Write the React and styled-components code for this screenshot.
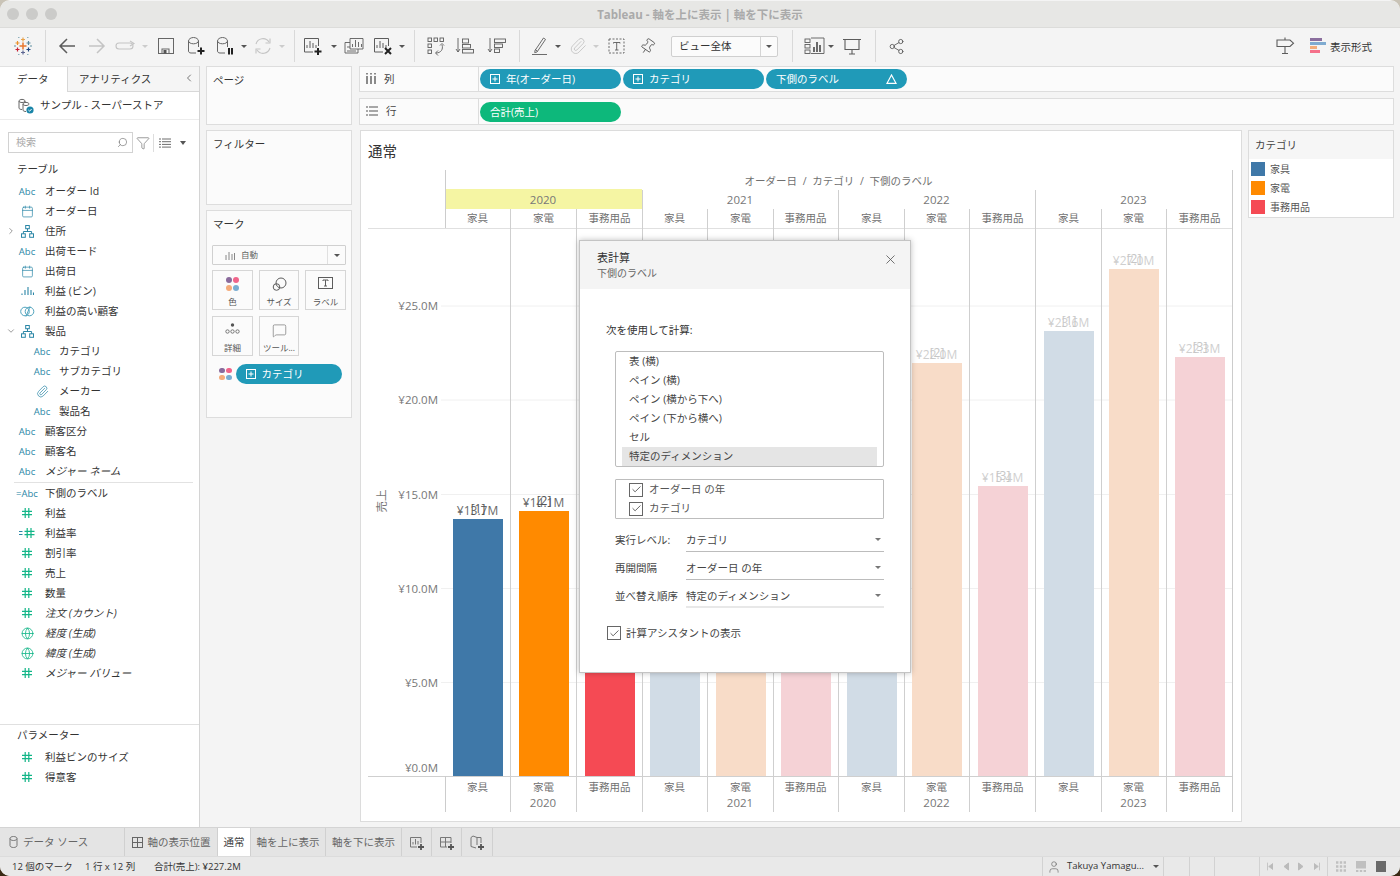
import React from 'react';
import styled, { createGlobalStyle } from 'styled-components';
import { Paperclip, Share2, Pin, Globe, Calendar, Search, Funnel, ChevronLeft, ChevronRight, ChevronDown, X, Check, MessageSquare, User } from 'lucide-react';

const FONT = `"Open Sans", "Noto Sans CJK JP", sans-serif`;

const Global = createGlobalStyle`
  html, body { margin: 0; padding: 0; height: 876px; overflow: hidden; background: linear-gradient(#c9c3b6 0 50%, #3a2a15 50%); }
  * { box-sizing: border-box; }
  body { font-family: ${FONT}; font-size: 10.5px; color: #333; }
`;

const Win = styled.div`
  position: relative; width: 1400px; height: 876px; border-radius: 10px; overflow: hidden;
  background: #f4f4f4; display: flex; flex-direction: column; padding-top: 1px;
`;
const Shift = styled.span`display: block; margin-top: -2px; white-space: nowrap;`;

/* title bar */
const TitleBar = styled.div`
  height: 27px; flex: none; background: #e7e7e5; border-bottom: 1px solid #dcdcda; display: flex; align-items: center;
  position: relative; justify-content: center; font-size: 11.5px; font-weight: 700; color: #aaa;
`;
const Lights = styled.div`position: absolute; left: 7px; top: 7px; display: flex; gap: 7px;`;
const Light = styled.span`width: 12px; height: 12px; border-radius: 50%; background: #cbcbc9;`;

/* toolbar */
const Toolbar = styled.div`
  height: 38px; flex: none; background: #f4f4f4; display: flex; align-items: center; padding: 0 28px 2px 0;
`;
const Slot = styled.div`
  width: ${p => p.$w || 20}px; margin-left: ${p => p.$ml || 0}px; flex: none; height: 24px;
  display: flex; align-items: center; justify-content: center;
  svg { display: block; }
`;
const Sep = styled.div`width: 1px; height: 32px; background: #d9d9d9; flex: none; margin-left: ${p => p.$ml}px;`;
const Caret = styled.span`
  display: inline-block; width: 0; height: 0; flex: none;
  border-left: ${p => p.$s || 3}px solid transparent; border-right: ${p => p.$s || 3}px solid transparent;
  border-top: ${p => (p.$s || 3) + 0.5}px solid ${p => p.$c || '#555'};
`;
const FitSelect = styled.div`
  width: 107px; height: 21px; margin-left: 14px; flex: none; background: #fbfbfb; border: 1px solid #cfcfcf; border-radius: 2px;
  display: flex; align-items: center; padding-left: 7px; font-size: 10.5px; color: #333;
`;
const FitCaret = styled.div`
  margin-left: auto; width: 17px; height: 100%; border-left: 1px solid #d5d5d5; display: flex; align-items: center; justify-content: center;
`;
const FormatLabel = styled.div`font-size: 10.5px; color: #333; margin-left: 4px; white-space: nowrap; width: 42px; flex: none;`;
const RightTools = styled.div`margin-left: auto; display: flex; align-items: center;`;

/* main */
const Main = styled.div`flex: 1; display: flex; min-height: 0;`;
const DataPane = styled.div`width: 200px; flex: none; background: #fff; border-right: 1px solid #d4d4d4; display: flex; flex-direction: column;`;
const PaneTabs = styled.div`display: flex; height: 26px; flex: none;`;
const PaneTab = styled.div`
  display: flex; align-items: center; font-size: 10.5px; color: #333; padding-left: ${p => p.$active ? 17 : 11}px; padding-bottom: 2px;
  width: ${p => p.$active ? 67 : 132}px; background: ${p => p.$active ? '#fff' : '#f5f5f5'};
  border-top: 1px solid #e2e2e2; border-left: ${p => p.$active ? 'none' : '1px solid #d8d8d8'};
  border-bottom: ${p => p.$active ? 'none' : '1px solid #d8d8d8'};
  svg { margin-left: auto; margin-right: 4px; }
`;
const SourceRow = styled.div`
  height: 28px; flex: none; display: flex; align-items: center; padding-left: 18px; gap: 6px; border-bottom: 1px solid #ececec;
  font-size: 10.5px; color: #333;
`;
const SearchRow = styled.div`display: flex; align-items: center; margin-top: 12px; height: 21px; flex: none; padding-left: 8px;`;
const SearchBox = styled.div`
  width: 125px; height: 21px; border: 1px solid #d2d2d2; display: flex; align-items: center; justify-content: space-between;
  padding: 0 4px 0 7px; color: #aaa; font-size: 10px; background: #fff;
`;
const SearchTools = styled.div`display: flex; align-items: center; margin-left: 3px;`;
const ThinSep = styled.div`width: 1px; height: 18px; background: #ddd; margin: 0 5px 0 3px;`;
const GroupHead = styled.div`height: 20px; margin-top: ${p => p.$mt || 0}px; margin-bottom: ${p => p.$mb || 0}px; padding-left: 17px; padding-bottom: 2px; display: flex; align-items: center; font-size: 10.5px; color: #333; flex: none;`;
const FieldRow = styled.div`height: 20px; flex: none; display: flex; align-items: center; padding-left: 4px; font-size: 10.5px; color: #333;`;
const Chev = styled.div`width: 14px; flex: none; display: flex; justify-content: center; color: #888;`;
const FieldIcon = styled.div`
  width: 18px; flex: none; margin-left: ${p => p.$indent ? 15 : 0}px; margin-right: ${p => p.$indent ? 8 : 9}px;
  display: flex; align-items: center; justify-content: center; font-size: 9.5px; color: #2a86a6; white-space: nowrap;
`;
const FieldName = styled.span`font-style: ${p => p.$italic ? 'italic' : 'normal'}; white-space: nowrap; margin-top: -2px;`;
const FieldRule = styled.div`height: 1px; background: #e2e2e2; margin: 1px 6px 0 14px; flex: none;`;
const ParamRule = styled.div`height: 1px; background: #e0e0e0; margin-top: 41px; flex: none;`;

/* cards */
const CardCol = styled.div`width: 146px; flex: none; margin-left: 6px; display: flex; flex-direction: column;`;
const Card = styled.div`
  border: 1px solid #ddd; background: #fbfbfb; height: ${p => p.$h}px; margin-top: ${p => p.$mt}px; flex: none; padding: 6px 5px;
`;
const CardTitle = styled.div`font-size: 10.5px; color: #333; line-height: 15px; padding-left: 1px;`;
const MarkSelect = styled.div`
  height: 20px; margin-top: 13px; border: 1px solid #d0d0d0; border-radius: 1px; display: flex; align-items: center; background: #fbfbfb;
  font-size: 8.5px; color: #666; padding-left: 12px; gap: 6px;
`;
const MarkSelectCaret = styled.div`margin-left: auto; width: 18px; height: 100%; border-left: 1px solid #e0e0e0; display: flex; align-items: center; justify-content: center;`;
const TileGrid = styled.div`display: grid; grid-template-columns: 41px 40px 41px; column-gap: 6px; row-gap: 6px; margin-top: 5px;`;
const Tile = styled.div`
  height: 40px; border: 1px solid #d6d6d6; background: #fbfbfb; display: flex; flex-direction: column; align-items: center; justify-content: space-between;
  padding: 6px 0 2px; font-size: 8.5px; color: #555; line-height: 11px; white-space: nowrap;
`;
const MarkPillRow = styled.div`display: flex; align-items: center; margin-top: 8px; padding-left: 7px; gap: 4px;`;
const Dots = styled.div`display: grid; grid-template-columns: 5.5px 5.5px; gap: 1.5px;`;
const Dot = styled.span`width: 5.5px; height: 5.5px; border-radius: 50%; background: ${p => p.$c};`;
const BigDots = styled(Dots)`grid-template-columns: 6px 6px; gap: 1.5px;`;
const BigDot = styled(Dot)`width: 6px; height: 6px;`;

/* pills */
const Pill = styled.div`
  width: ${p => p.$w || 141}px; height: 20px; flex: none; border-radius: 10px; background: ${p => p.$green ? '#0db87b' : '#209ab8'};
  color: #fff; font-size: 10.5px; display: flex; align-items: center; padding-left: ${p => p.$pl || 10}px; padding-bottom: 1px; white-space: nowrap; gap: 6px;
`;
const PillEnd = styled.span`margin-left: auto; margin-right: 10px; display: flex;`;

/* right */
const RightCol = styled.div`width: 1035px; margin-left: 7px; flex: none; display: flex; flex-direction: column;`;
const Shelf = styled.div`
  height: ${p => p.$h}px; margin-top: ${p => p.$mt || 0}px; flex: none; border: 1px solid #ddd; background: #fbfbfb; display: flex;
`;
const ShelfHead = styled.div`
  width: 119px; flex: none; border-right: 1px solid #ddd; display: flex; align-items: center; padding: 0 0 2px 6px; gap: 8px; font-size: 10.5px; color: #444;
`;
const ShelfBody = styled.div`display: flex; align-items: center; gap: 2px; padding-left: 1px;`;
const ViewRow = styled.div`display: flex; margin-top: 5px; flex: 1; min-height: 0;`;
const View = styled.div`
  width: 882px; margin-left: 1px; height: 692px; border: 1px solid #dcdcdc; background: #fff; flex: none;
  svg { display: block; }
`;
const ViewTitle = styled.div`height: 39px; padding: 11px 0 0 7px; font-size: 14.5px; line-height: 20px; color: #333;`;
const Legend = styled.div`width: 146px; height: 88px; margin-left: 6px; flex: none; border: 1px solid #dcdcdc; background: #fff;`;
const LegendHead = styled.div`height: 28px; background: #f6f6f6; padding-left: 6px; padding-bottom: 1px; display: flex; align-items: center; font-size: 10.5px; color: #444;`;
const LegendRows = styled.div`padding: 0 0 0 2px;`;
const LegendRow = styled.div`height: 19px; display: flex; align-items: center; gap: 5px; font-size: 10px; color: #555;`;
const Swatch = styled.span`width: 14px; height: 14px; background: ${p => p.$c};`;

/* chart */
const AxisText = styled.text`font-family: ${FONT}; font-size: 11.5px; fill: #777; text-anchor: ${p => p.$anchor || 'middle'};`;
const CatText = styled.text`font-family: ${FONT}; font-size: 10.5px; fill: #707070; text-anchor: middle; word-spacing: ${p => p.$ws || 0}px;`;
const YearText = styled.text`font-family: ${FONT}; font-size: 11.5px; fill: #777; text-anchor: middle;`;
const ValueText = styled.text`font-family: ${FONT}; font-size: 12px; text-anchor: middle; fill: ${p => p.$faded ? '#cfcfcf' : '#6a6a6a'};`;
const IdxText = styled.text`font-family: ${FONT}; font-size: 12px; text-anchor: middle; fill: ${p => p.$faded ? '#c6c6c6' : '#555'};`;

/* tabs */
const TabBar = styled.div`height: 29px; flex: none; background: #e4e4e4; border-top: 1px solid #d4d4d4; display: flex;`;
const SheetTab = styled.div`
  width: ${p => p.$w}px; flex: none; display: flex; align-items: center; justify-content: ${p => p.$left ? 'flex-start' : 'center'};
  padding-left: ${p => p.$left ? p.$left : 0}px; gap: 5px; font-size: 10.5px; white-space: nowrap;
  color: ${p => p.$active ? '#444' : '#666'}; background: ${p => p.$active ? '#fff' : 'transparent'}; border-right: 1px solid #d0d0d0;
`;
const StatusBar = styled.div`height: 20px; flex: none; background: #e9e9e9; border-top: 1px solid #dcdcdc; display: flex; align-items: center; font-size: 9.5px; color: #333;`;
const StatusText = styled.span`white-space: nowrap; margin-left: ${p => p.$ml || 0}px; width: ${p => p.$w}px; flex: none; margin-top: -2px;`;
const StatusRight = styled.div`margin-left: auto; display: flex; height: 100%;`;
const StatusCell = styled.div`
  width: ${p => p.$w}px; flex: none; border-left: 1px solid #d2d2d2; display: flex; align-items: center; padding-left: ${p => p.$pl || 0}px; gap: ${p => p.$gap || 0}px; white-space: nowrap;
`;
const UserName = styled.span`width: 80px; flex: none; margin-top: -2px;`;
const DimIcon = styled.span`display: flex; color: #bbb; width: 6px; justify-content: center;`;
const ViewSizeBox = styled.span`width: 10px; height: 11px; background: ${p => p.$c}; flex: none;`;

/* dialog */
const Dialog = styled.div`
  position: absolute; left: 579px; top: 240px; width: 332px; height: 433px; background: #fff; border: 1px solid #c4c4c4;
  box-shadow: 0 0 6px rgba(0,0,0,.25); display: flex; flex-direction: column;
`;
const DialogHead = styled.div`height: 48px; flex: none; background: #f4f4f4; display: flex; justify-content: space-between; padding: 9px 12px 0 17px;`;
const DialogTitle = styled.div`font-size: 11px; color: #333; line-height: 16px;`;
const DialogSub = styled.div`font-size: 10px; color: #666; line-height: 14px;`;
const DialogBody = styled.div`padding-left: 26px;`;
const BodyLabel = styled.div`margin-top: 33px; line-height: 16px; font-size: 10.5px; color: #333;`;
const ListBox = styled.div`margin: 13px 0 0 9px; width: 269px; height: 116px; border: 1px solid #bdbdbd; border-radius: 2px; background: #fff;`;
const ListItem = styled.div`
  height: 19px; display: flex; align-items: center; font-size: 10.5px; color: #444; white-space: nowrap;
  margin: 0 6px; padding: 0 0 2px 7px; background: ${p => p.$sel ? '#e5e5e5' : 'transparent'};
`;
const CheckBox = styled.div`margin: 12px 0 0 9px; width: 269px; height: 40px; border: 1px solid #bdbdbd; border-radius: 1px; padding-left: 13px;`;
const CheckRow = styled.div`height: 19px; display: flex; align-items: center; gap: 6px; font-size: 10.5px; color: #555;`;
const Tick = styled.span`
  width: 14px; height: 14px; flex: none; background: #fff; border: 1px solid #666; display: flex; align-items: center; justify-content: center; color: #444;
`;
const FormRows = styled.div`margin: 11px 0 0 9px; width: 269px;`;
const FormRow = styled.div`display: flex; height: 22px; margin-bottom: ${p => p.$mb || 0}px; font-size: 10.5px; color: #444;`;
const FormLabel = styled.div`width: 71px; flex: none; padding-top: 3px; line-height: 15px; white-space: nowrap;`;
const FormValue = styled.div`
  flex: 1; display: flex; justify-content: space-between; padding: 3px 3px 0 0; line-height: 15px; white-space: nowrap;
  border-bottom: ${p => p.$light ? '2px solid #e8e8e8' : '1px solid #bcbcbc'};
  span:last-child { margin-top: 5px; }
`;
const AssistRow = styled.div`display: flex; align-items: center; gap: 5px; margin: 18px 0 0 1px; font-size: 10.5px; color: #444;`;

/* icons */
const Svg = ({ w = 20, h = 20, c = '#5c5c5c', sw = 1.1, children }) => (
  <svg width={w} height={h} viewBox={`0 0 ${w} ${h}`} fill="none" stroke={c} strokeWidth={sw}>{children}</svg>
);
const BOLD = { stroke: '#222', strokeWidth: 2 };

const TableauLogo = () => (
  <svg width="20" height="20" viewBox="0 0 20 20" fill="none" strokeWidth="1.2">
    <path d="M10 6.500v7M6.500 10h7" stroke="#e8762d" strokeWidth="1.500" />
    <path d="M10 1.500v4M8 3.500h4" stroke="#e8a24a" />
    <path d="M10 14.500v4M8 16.500h4" stroke="#5c6692" />
    <path d="M4.500 5v4M2.500 7h4" stroke="#eb912b" />
    <path d="M15.500 5v4M13.500 7h4" stroke="#5b879b" />
    <path d="M4.500 11.500v4M2.500 13.500h4" stroke="#c72035" />
    <path d="M15.500 11.500v4M13.500 13.500h4" stroke="#1f447e" />
    <path d="M1 10h2M2 9v2M17 10h2M18 9v2M5 1.500h1.500M14 1.500h1.500M5 18.500h1.500M14 18.500h1.500" stroke="#8fb0bc" strokeWidth="1" />
  </svg>
);
const ArrowBack = ({ c }) => <Svg c={c} sw={1.5}><path d="M18 10H3M10 3l-7 7 7 7" /></Svg>;
const ArrowFwd = ({ c }) => <Svg c={c} sw={1.5}><path d="M2 10h15M10 3l7 7-7 7" /></Svg>;
const RedoIcon = () => <Svg w={22} c="#c4c4c4" sw={1.1}><rect x="1" y="7" width="17" height="6" rx="3" /><path d="M15 5l4 2.500-4 2.500" /></Svg>;
const SaveIcon = () => <Svg w={18} h={18} sw={1} c="#666"><rect x="1.500" y="1.500" width="15" height="15" /><rect x="5" y="12" width="7" height="4.500" /><rect x="6.500" y="13" width="3" height="3.500" fill="#555" stroke="none" /></Svg>;
const Cyl = () => <path d="M2.500 5v10c0 1.200 1 2 2.500 2h5M2.500 5c0-2 2.500-3.500 5-3.500S12.500 3 12.500 5v6M2.500 5c0 1.600 2.500 2.800 5 2.800s5-1.200 5-2.800" stroke="#666" strokeWidth="1" />;
const DsPlus = () => <Svg><Cyl /><path d="M15 11.500v7M11.500 15h7" {...BOLD} /></Svg>;
const DsPause = () => <Svg><Cyl /><path d="M14 12v6.500M17 12v6.500" {...BOLD} /></Svg>;
const RefreshIcon = () => <Svg c="#c4c4c4" sw={1.100}><path d="M3 8a7.200 7.200 0 0 1 13-2M17 12a7.200 7.200 0 0 1-13 2" /><path d="M17 2.500V7h-4.500M3 17.500V13h4.500" /></Svg>;
const Bars = ({ x = 4, y = 12 }) => <path d={`M${x} ${y}v-3M${x + 3} ${y}v-7M${x + 6} ${y}v-5M${x + 9} ${y}v-3`} />;
const NewSheet = () => <Svg sw={1}><path d="M10 16H1.500V2.500h14V10" /><Bars /><path d="M15 12v7M11.500 15.500h7" {...BOLD} /></Svg>;
const DupSheet = () => <Svg sw={.9}><path d="M6 13V2.500h13V13z" /><Bars x={8.500} y={11} /><path d="M6 6.500H1V17h13v-4" /><path d="M3 15h9M3 11h3" /></Svg>;
const ClearSheet = () => <Svg sw={1}><path d="M10 16H1.500V2.500h14V10" /><Bars /><path d="M12 12l6 6M18 12l-6 6" {...BOLD} /></Svg>;
const SwapIcon = () => <Svg sw={.9}><rect x="2" y="2" width="3.500" height="3.500" /><rect x="8" y="2" width="3.500" height="3.500" /><rect x="14" y="2" width="3.500" height="3.500" /><rect x="2" y="8" width="3.500" height="3.500" /><rect x="2" y="14" width="3.500" height="3.500" /><path d="M16 9c1.500 4-1 8-6 8M12 14.500L9.500 17l2.500 2.500M14 9.500l2-2 2 2" /></Svg>;
const SortAsc = () => <Svg sw={.9}><path d="M3 2v14M1 13l2 3 2-3" /><rect x="7.500" y="3" width="6" height="4" /><rect x="7.500" y="8.500" width="8" height="3.500" /><rect x="7.500" y="13.500" width="11" height="3.500" /></Svg>;
const SortDesc = () => <Svg sw={.9}><path d="M3 2v14M1 13l2 3 2-3" /><rect x="7.500" y="3" width="11" height="3.500" /><rect x="7.500" y="8" width="8" height="3.500" /><rect x="7.500" y="13" width="5" height="3.500" /></Svg>;
const HighlightIcon = () => <Svg sw={.9}><path d="M5 14.500L13.500 2l2 1.400L7 16l-2.300.600zM5 13.500l2.300 1.600" /><path d="M2 18.500h15" /></Svg>;
const TBox = () => <Svg sw={.9}><rect x="2" y="3" width="15" height="14" strokeDasharray="2 1.500" /><path d="M6.500 7.500V6.500h6.500v1M9.700 6.500v7.500M8 14h3.500" /></Svg>;
const ShowMe = () => <Svg w={22} sw={.9}><rect x="1" y="3" width="5" height="3.500" /><rect x="1" y="8.500" width="5" height="3.500" /><rect x="1" y="14" width="5" height="3.500" /><path d="M7 2h13v15.500H7" /><path d="M10 16V11M13 16V6M16 16V9" strokeWidth="1.800" /></Svg>;
const PresentIcon = () => <Svg sw={1.100}><path d="M1 3.500h18M3 3.500v10h14v-10M10 13.500v4.500M7 18h6" /></Svg>;
const SignPost = () => <Svg sw={1.100}><path d="M2 4h13l3.500 3.200L15 10.500H2zM10 10.500V17M7 17.500h6M10 1.500V4" /></Svg>;
const FormatIcon = () => (
  <svg width="16" height="16" viewBox="0 0 16 16"><rect y="0" width="12" height="3" fill="#8b6f9e" /><rect y="4" width="16" height="3" fill="#7fabd0" /><rect y="8" width="7" height="3" fill="#f4ad7a" /><rect y="12" width="10" height="3" fill="#f5708a" /></svg>
);
const ListLines = () => <Svg w={12} h={10} sw={.9}><path d="M0 1h2M3 1h9M0 3.700h2M3 3.700h9M0 6.400h2M3 6.400h9M0 9.100h2M3 9.100h9" /></Svg>;
const ColBars = () => <Svg w={10} h={11} sw={1.500} c="#666"><path d="M1 0v1.500M1 3v8M5 0v1.500M5 3v8M9 0v1.500M9 3v8" /></Svg>;
const RowLines = () => <Svg w={12} h={10} sw={1.200} c="#555"><path d="M0 1h2M3 1h9M0 5h2M3 5h9M0 9h2M3 9h9" /></Svg>;
const PlusBox = () => <Svg w={10} h={10} c="#fff" sw={1}><rect x=".5" y=".5" width="9" height="9" /><path d="M5 2.500v5M2.500 5h5" /></Svg>;
const Delta = () => <Svg w={11} h={10} c="#fff" sw={1.200}><path d="M5.500 1L10 9.300H1z" /></Svg>;
const TabCylinder = () => <Svg w={9} h={12} c="#777" sw={1}><path d="M1 2.500v7c0 1.200 1.500 2 3.500 2s3.500-.8 3.500-2v-7M1 2.500c0-1.200 1.500-2 3.500-2s3.500.8 3.500 2-1.500 2-3.500 2-3.500-.8-3.500-2z" /></Svg>;

const Hier = () => <Svg w={13} h={13} c="#2a86a6" sw={1}><rect x="4.700" y=".5" width="3.600" height="3.200" /><rect x=".5" y="8.800" width="3.800" height="3.500" /><rect x="8.700" y="8.800" width="3.800" height="3.500" /><path d="M6.500 3.700V6.500M2.400 8.800V6.500h8.200v2.300" /></Svg>;
const Bins = () => <Svg w={13} h={10} c="#2a86a6" sw={1.100}><path d="M1 9V7.500M4 9V4M7 9V1M10 9V4M12.500 9V6.500" /></Svg>;
const SetIcon = () => <Svg w={15} h={13} c="#4fa3bd" sw={1}><circle cx="5" cy="6.500" r="4.300" /><circle cx="9.500" cy="6.500" r="4.300" /><path d="M6 11.500l4-10" /></Svg>;
const Hash = ({ eq }) => (
  <svg width={eq ? 16 : 10} height="10" viewBox={eq ? '0 0 16 10' : '0 0 10 10'} fill="none" stroke="#12b587" strokeWidth="1.200">
    {eq && <path d="M0 3.500h3.500M0 6.500h3.500" stroke="#2a86a6" />}
    <path d={eq ? 'M8.200 0v10M12 0v10M5.500 3.300h10M5.500 6.700h10' : 'M3.200 0v10M6.800 0v10M0 3.300h10M0 6.700h10'} />
  </svg>
);
const Abc = ({ eq }) => <span>{eq ? '=Abc' : 'Abc'}</span>;
const TEAL = '#2a86a6', GREEN = '#12b587';

const ICONS = {
  abc: <Abc />, eqabc: <Abc eq />,
  date: <Calendar size={13} color={TEAL} strokeWidth={1.300} />,
  hier: <Hier />, bin: <Bins />, set: <SetIcon />,
  clip: <Paperclip size={13} color={TEAL} strokeWidth={1.300} />,
  hash: <Hash />, eqhash: <Hash eq />,
  globe: <Globe size={13} color={GREEN} strokeWidth={1.500} />,
};

const fieldsA = [
  ['abc', 'オーダー Id'], ['date', 'オーダー日'], ['hier', '住所', { chev: 'r' }], ['abc', '出荷モード'], ['date', '出荷日'],
  ['bin', '利益 (ビン)'], ['set', '利益の高い顧客'], ['hier', '製品', { chev: 'd' }],
  ['abc', 'カテゴリ', { indent: 1 }], ['abc', 'サブカテゴリ', { indent: 1 }], ['clip', 'メーカー', { indent: 1 }], ['abc', '製品名', { indent: 1 }],
  ['abc', '顧客区分'], ['abc', '顧客名'], ['abc', 'メジャー ネーム', { italic: 1 }],
];
const fieldsB = [
  ['eqabc', '下側のラベル'], ['hash', '利益'], ['eqhash', '利益率'], ['hash', '割引率'], ['hash', '売上'], ['hash', '数量'],
  ['hash', '注文 (カウント)', { italic: 1 }], ['globe', '経度 (生成)', { italic: 1 }], ['globe', '緯度 (生成)', { italic: 1 }], ['hash', 'メジャー バリュー', { italic: 1 }],
];
const params = [['hash', '利益ビンのサイズ'], ['hash', '得意客']];

const Field = ({ f }) => {
  const [icon, name, o = {}] = f;
  return (
    <FieldRow>
      <Chev>{o.chev === 'r' && <ChevronRight size={10} />}{o.chev === 'd' && <ChevronDown size={10} />}</Chev>
      <FieldIcon $indent={o.indent}>{ICONS[icon]}</FieldIcon>
      <FieldName $italic={o.italic}>{name}</FieldName>
    </FieldRow>
  );
};

const CATS = ['家具', '家電', '事務用品'];
const SOLID = ['#3f78a8', '#ff8a00', '#f54a54'];
const FADED = ['#d1dce6', '#f8dcc8', '#f5d2d6'];
const barX = [453, 519, 585, 650, 716, 781, 847, 912, 978, 1044, 1109, 1175];
const tops = [519, 511, 540, 520, 510, 510, 500, 363, 486, 331, 269, 357];
const vals = ['¥13.7M', '¥14.1M', '', '', '', '', '', '¥22.0M', '¥15.4M', '¥23.6M', '¥27.0M', '¥22.3M'];
const cols = [445.5, 510.5, 576.5, 642.5, 707.5, 773.5, 838.5, 904.5, 969.5, 1035.5, 1101.5, 1166.5, 1232.5];
const yearCenters = [['2020', 543], ['2021', 740], ['2022', 936.5], ['2023', 1133.5]];
const ticks = [['¥25.0M', 306], ['¥20.0M', 400], ['¥15.0M', 494.5], ['¥10.0M', 588.5], ['¥5.0M', 682.5]];

const Chart = () => (
  <svg width="880" height="651" viewBox="361 170 880 651">
    <rect x="445" y="189" width="197" height="20" fill="#f5f5a3" />
    {ticks.map(([, y]) => <line key={y} x1="441" x2="1232" y1={y} y2={y} stroke="#f0f0f0" />)}
    {barX.map((x, i) => {
      const active = i < 3;
      return <rect key={x} x={x} y={tops[i]} width="50" height={776 - tops[i]} fill={active ? SOLID[i % 3] : FADED[i % 3]} />;
    })}
    <line x1="368" x2="1232" y1="228.500" y2="228.500" stroke="#e0e0e0" />
    <line x1="368" x2="1232" y1="776.500" y2="776.500" stroke="#cfcfcf" />
    <line x1="445.500" x2="445.500" y1="170" y2="228" stroke="#ccc" />
    <line x1="445.500" x2="445.500" y1="776" y2="812" stroke="#ccc" />
    <line x1="1232.500" x2="1232.500" y1="170" y2="812" stroke="#ccc" />
    {cols.slice(1, 12).map((x, i) => (
      <line key={x} x1={x} x2={x} y1={(i + 1) % 3 === 0 ? 190 : 209} y2="812" stroke="#cfcfcf" />
    ))}
    <CatText $ws={3} x="838.500" y="184.500">オーダー日 / カテゴリ / 下側のラベル</CatText>
    {yearCenters.map(([t, x]) => <YearText key={t} x={x} y="204">{t}</YearText>)}
    {barX.map((x, i) => (
      <React.Fragment key={x}>
        <CatText x={x + 24.500} y="222">{CATS[i % 3]}</CatText>
        <CatText x={x + 24.500} y="791">{CATS[i % 3]}</CatText>
      </React.Fragment>
    ))}
    {yearCenters.map(([t, x]) => <YearText key={t} x={x} y="807">{t}</YearText>)}
    {ticks.map(([t, y]) => <AxisText key={t} $anchor="end" x="438" y={y + 4}>{t}</AxisText>)}
    <AxisText $anchor="end" x="438" y="772">¥0.0M</AxisText>
    <AxisText transform="translate(386 501) rotate(-90)" x="0" y="0">売上</AxisText>
    {barX.map((x, i) => vals[i] && (
      <React.Fragment key={x}>
        <ValueText $faded={i >= 3} x={x + 24.500} y={tops[i] - 4}>{vals[i]}</ValueText>
        <IdxText $faded={i >= 3} x={x + 25} y={tops[i] - 6}>[{(i % 3) + 1}]</IdxText>
      </React.Fragment>
    ))}
  </svg>
);

const markDots = ['#8a6a9c', '#f0648a', '#f5ab7a', '#79add2'];

export default function App() {
  return (
    <>
      <Global />
      <Win>
        <TitleBar>
          <Lights><Light /><Light /><Light /></Lights>
          Tableau - 軸を上に表示 | 軸を下に表示
        </TitleBar>
        <Toolbar>
          <Slot $ml={13}><TableauLogo /></Slot>
          <Sep $ml={12} />
          <Slot $ml={11}><ArrowBack /></Slot>
          <Slot $ml={10}><ArrowFwd c="#c4c4c4" /></Slot>
          <Slot $ml={8} $w={22}><RedoIcon /></Slot>
          <Slot $ml={5} $w={6}><Caret $c="#ccc" /></Slot>
          <Slot $ml={9} $w={18}><SaveIcon /></Slot>
          <Slot $ml={11}><DsPlus /></Slot>
          <Slot $ml={9}><DsPause /></Slot>
          <Slot $ml={6} $w={6}><Caret /></Slot>
          <Slot $ml={6}><RefreshIcon /></Slot>
          <Slot $ml={6} $w={6}><Caret $c="#ccc" /></Slot>
          <Sep $ml={9} />
          <Slot $ml={8}><NewSheet /></Slot>
          <Slot $ml={8} $w={6}><Caret /></Slot>
          <Slot $ml={7}><DupSheet /></Slot>
          <Slot $ml={9}><ClearSheet /></Slot>
          <Slot $ml={6} $w={6}><Caret /></Slot>
          <Sep $ml={9} />
          <Slot $ml={11}><SwapIcon /></Slot>
          <Slot $ml={9}><SortAsc /></Slot>
          <Slot $ml={12}><SortDesc /></Slot>
          <Sep $ml={12} />
          <Slot $ml={10}><HighlightIcon /></Slot>
          <Slot $ml={5} $w={6}><Caret /></Slot>
          <Slot $ml={7}><Paperclip size={18} color="#c4c4c4" strokeWidth={1.200} /></Slot>
          <Slot $ml={5} $w={6}><Caret $c="#ccc" /></Slot>
          <Slot $ml={8}><TBox /></Slot>
          <Slot $ml={10}><Pin size={17} color="#555" strokeWidth={1.200} style={{ transform: 'rotate(35deg)' }} /></Slot>
          <FitSelect><Shift>ビュー全体</Shift><FitCaret><Caret /></FitCaret></FitSelect>
          <Sep $ml={14} />
          <Slot $ml={11} $w={22}><ShowMe /></Slot>
          <Slot $ml={2} $w={6}><Caret /></Slot>
          <Slot $ml={8}><PresentIcon /></Slot>
          <Sep $ml={13} />
          <Slot $ml={10}><Share2 size={17} color="#555" strokeWidth={1.200} /></Slot>
          <RightTools>
            <Slot><SignPost /></Slot>
            <Slot $ml={15} $w={16}><FormatIcon /></Slot>
            <FormatLabel>表示形式</FormatLabel>
          </RightTools>
        </Toolbar>
        <Main>
          <DataPane>
            <PaneTabs>
              <PaneTab $active>データ</PaneTab>
              <PaneTab>アナリティクス<ChevronLeft size={12} color="#777" /></PaneTab>
            </PaneTabs>
            <SourceRow>
              <svg width="16" height="16" viewBox="0 0 16 16" fill="none" stroke="#666" strokeWidth="1">
                <path d="M1 3v7c0 1 1.500 1.500 3 1.500M1 3c0-1 1.500-1.600 3-1.600S7 2 7 3M1 3c0 1 1.500 1.500 3 1.500S7 4 7 3v2" />
                <path d="M5 6v6c0 1 1.500 1.500 3 1.500M5 6c0-1 1.500-1.600 3-1.600s3 .6 3 1.600-1.500 1.500-3 1.500S5 7 5 6z" />
                <circle cx="12" cy="12" r="3.600" fill="#1a85a8" stroke="none" />
                <path d="M10.400 12l1.200 1.200 2-2.200" stroke="#fff" />
              </svg>
              <Shift>サンプル - スーパーストア</Shift>
            </SourceRow>
            <SearchRow>
              <SearchBox><Shift>検索</Shift><Search size={11} color="#666" strokeWidth={1.300} style={{ transform: 'scaleX(-1)' }} /></SearchBox>
              <SearchTools>
                <Funnel size={14} color="#666" strokeWidth={1.100} />
                <ThinSep />
                <ListLines />
                <Slot $ml={7} $w={10} style={{ height: 'auto' }}><Caret $s={3.500} /></Slot>
              </SearchTools>
            </SearchRow>
            <GroupHead $mt={6} $mb={2}>テーブル</GroupHead>
            {fieldsA.map(f => <Field key={f[1]} f={f} />)}
            <FieldRule />
            {fieldsB.map(f => <Field key={f[1]} f={f} />)}
            <ParamRule />
            <GroupHead $mb={2}>パラメーター</GroupHead>
            {params.map(f => <Field key={f[1]} f={f} />)}
          </DataPane>

          <CardCol>
            <Card $h={59} $mt={0}><CardTitle>ページ</CardTitle></Card>
            <Card $h={75} $mt={5}><CardTitle>フィルター</CardTitle></Card>
            <Card $h={208} $mt={5}>
              <CardTitle>マーク</CardTitle>
              <MarkSelect>
                <Svg w={10} h={9} c="#888" sw={1}><path d="M1 9V4M4 9V1M7 9V3M9.500 9V2" /></Svg>
                <Shift>自動</Shift>
                <MarkSelectCaret><Caret /></MarkSelectCaret>
              </MarkSelect>
              <TileGrid>
                <Tile><BigDots>{markDots.map(c => <BigDot key={c} $c={c} />)}</BigDots>色</Tile>
                <Tile><Svg w={15} h={14} sw={1}><circle cx="9" cy="6" r="5" /><circle cx="4.500" cy="10" r="3.300" /></Svg>サイズ</Tile>
                <Tile><Svg w={15} h={13} sw={1}><rect x=".5" y=".5" width="14" height="11" /><path d="M5 4V3h5v1M7.500 3v6M6 9h3" /></Svg>ラベル</Tile>
                <Tile>
                  <Svg w={15} h={12} sw={.8}><circle cx="7.500" cy="2" r="1.700" fill="#555" stroke="none" /><circle cx="2.500" cy="8.500" r="1.700" /><circle cx="7.500" cy="8.500" r="1.700" /><circle cx="12.500" cy="8.500" r="1.700" /></Svg>
                  詳細
                </Tile>
                <Tile><MessageSquare size={15} color="#666" strokeWidth={1} />ツール...</Tile>
              </TileGrid>
              <MarkPillRow>
                <Dots>{markDots.map(c => <Dot key={c} $c={c} />)}</Dots>
                <Pill $w={106}><PlusBox />カテゴリ</Pill>
              </MarkPillRow>
            </Card>
          </CardCol>

          <RightCol>
            <Shelf $h={26}>
              <ShelfHead><ColBars />列</ShelfHead>
              <ShelfBody>
                <Pill><PlusBox />年(オーダー日)</Pill>
                <Pill><PlusBox />カテゴリ</Pill>
                <Pill>下側のラベル<PillEnd><Delta /></PillEnd></Pill>
              </ShelfBody>
            </Shelf>
            <Shelf $h={27} $mt={6}>
              <ShelfHead><RowLines />行</ShelfHead>
              <ShelfBody><Pill $green>合計(売上)</Pill></ShelfBody>
            </Shelf>
            <ViewRow>
              <View>
                <ViewTitle>通常</ViewTitle>
                <Chart />
              </View>
              <Legend>
                <LegendHead>カテゴリ</LegendHead>
                <LegendRows>
                  {CATS.map((c, i) => <LegendRow key={c}><Swatch $c={SOLID[i]} />{c}</LegendRow>)}
                </LegendRows>
              </Legend>
            </ViewRow>
          </RightCol>
        </Main>

        <TabBar>
          <SheetTab $w={125} $left={9}><TabCylinder /><Shift>データ ソース</Shift></SheetTab>
          <SheetTab $w={93}>
            <Svg w={11} h={11} c="#666" sw={1}><rect x=".5" y=".5" width="10" height="10" /><path d="M5.500 0v11M0 5.500h11" /></Svg>
            <Shift>軸の表示位置</Shift>
          </SheetTab>
          <SheetTab $w={33} $active><Shift>通常</Shift></SheetTab>
          <SheetTab $w={75}><Shift>軸を上に表示</Shift></SheetTab>
          <SheetTab $w={76}><Shift>軸を下に表示</Shift></SheetTab>
          <SheetTab $w={30}><Svg w={16} h={15} c="#777" sw={1}><path d="M8 12H1.500V2.500H12V8" /><path d="M4 9.500V7M6.500 9.500V4M9 9.500V6" /><path d="M12 9v6M9 12h6" stroke="#555" strokeWidth="1.800" /></Svg></SheetTab>
          <SheetTab $w={30}><Svg w={16} h={15} c="#777" sw={1}><path d="M8 12H1.500V2.500H12V8M1.500 7H12M6.500 2.500V12" /><path d="M12 9v6M9 12h6" stroke="#555" strokeWidth="1.800" /></Svg></SheetTab>
          <SheetTab $w={31}><Svg w={16} h={15} c="#777" sw={1}><path d="M7 13l-5-1.500V2.500L4 1l4 1.500h4V8M8 2.500V10" /><path d="M12 9v6M9 12h6" stroke="#555" strokeWidth="1.800" /></Svg></SheetTab>
        </TabBar>
        <StatusBar>
          <StatusText $ml={12} $w={73}>12 個のマーク</StatusText>
          <StatusText $w={69}>1 行 x 12 列</StatusText>
          <StatusText>合計(売上): ¥227.2M</StatusText>
          <StatusRight>
            <StatusCell $w={121} $pl={4} $gap={6}>
              <User size={14} color="#555" strokeWidth={1} />
              <UserName>Takuya Yamagu...</UserName>
              <Caret />
            </StatusCell>
            <StatusCell $w={26} />
            <StatusCell $w={25} />
            <StatusCell $w={45} />
            <StatusCell $w={68} $pl={7} $gap={9.500}>
              <DimIcon><Svg w={7} h={9} c="#bbb" sw={1}><path d="M.5 0v9" /><path d="M7 1L2 4.500 7 8z" fill="#bbb" /></Svg></DimIcon>
              <DimIcon><Svg w={6} h={9} c="#bbb" sw={1}><path d="M5.500 1L1 4.500 5.500 8z" fill="#bbb" /></Svg></DimIcon>
              <DimIcon><Svg w={6} h={9} c="#bbb" sw={1}><path d="M.5 1L5 4.500 .5 8z" fill="#bbb" /></Svg></DimIcon>
              <DimIcon><Svg w={7} h={9} c="#bbb" sw={1}><path d="M6.500 0v9" /><path d="M0 1l5 3.500L0 8z" fill="#bbb" /></Svg></DimIcon>
            </StatusCell>
            <StatusCell $w={73} $pl={8} $gap={10}>
              <Svg w={10} h={11} c="#c0c0c0" sw={2.400}><path d="M0 1.500h10M0 5.500h10M0 9.500h10" strokeDasharray="2.400 1.400" /></Svg>
              <Svg w={10} h={11} c="#c0c0c0" sw={2}><rect x="0" y="0" width="10" height="7.500" fill="#c0c0c0" stroke="none" /><path d="M0 10h10" strokeDasharray="2.400 1.400" /></Svg>
              <ViewSizeBox $c="#6a6a6a" />
            </StatusCell>
          </StatusRight>
        </StatusBar>

        <Dialog>
          <DialogHead>
            <div>
              <DialogTitle>表計算</DialogTitle>
              <DialogSub>下側のラベル</DialogSub>
            </div>
            <X size={15} color="#555" strokeWidth={1.300} style={{ marginTop: 2 }} />
          </DialogHead>
          <DialogBody>
            <BodyLabel>次を使用して計算:</BodyLabel>
            <ListBox>
              <ListItem>表 (横)</ListItem>
              <ListItem>ペイン (横)</ListItem>
              <ListItem>ペイン (横から下へ)</ListItem>
              <ListItem>ペイン (下から横へ)</ListItem>
              <ListItem>セル</ListItem>
              <ListItem $sel>特定のディメンション</ListItem>
            </ListBox>
            <CheckBox>
              <CheckRow><Tick><Check size={11} strokeWidth={1.800} /></Tick><Shift>オーダー日 の年</Shift></CheckRow>
              <CheckRow><Tick><Check size={11} strokeWidth={1.800} /></Tick><Shift>カテゴリ</Shift></CheckRow>
            </CheckBox>
            <FormRows>
              <FormRow $mb={6}><FormLabel>実行レベル:</FormLabel><FormValue><span>カテゴリ</span><Caret $c="#777" /></FormValue></FormRow>
              <FormRow $mb={6}><FormLabel>再開間隔</FormLabel><FormValue><span>オーダー日 の年</span><Caret $c="#777" /></FormValue></FormRow>
              <FormRow><FormLabel>並べ替え順序</FormLabel><FormValue $light><span>特定のディメンション</span><Caret $c="#777" /></FormValue></FormRow>
            </FormRows>
            <AssistRow><Tick><Check size={11} strokeWidth={1.800} /></Tick><Shift>計算アシスタントの表示</Shift></AssistRow>
          </DialogBody>
        </Dialog>
      </Win>
    </>
  );
}
